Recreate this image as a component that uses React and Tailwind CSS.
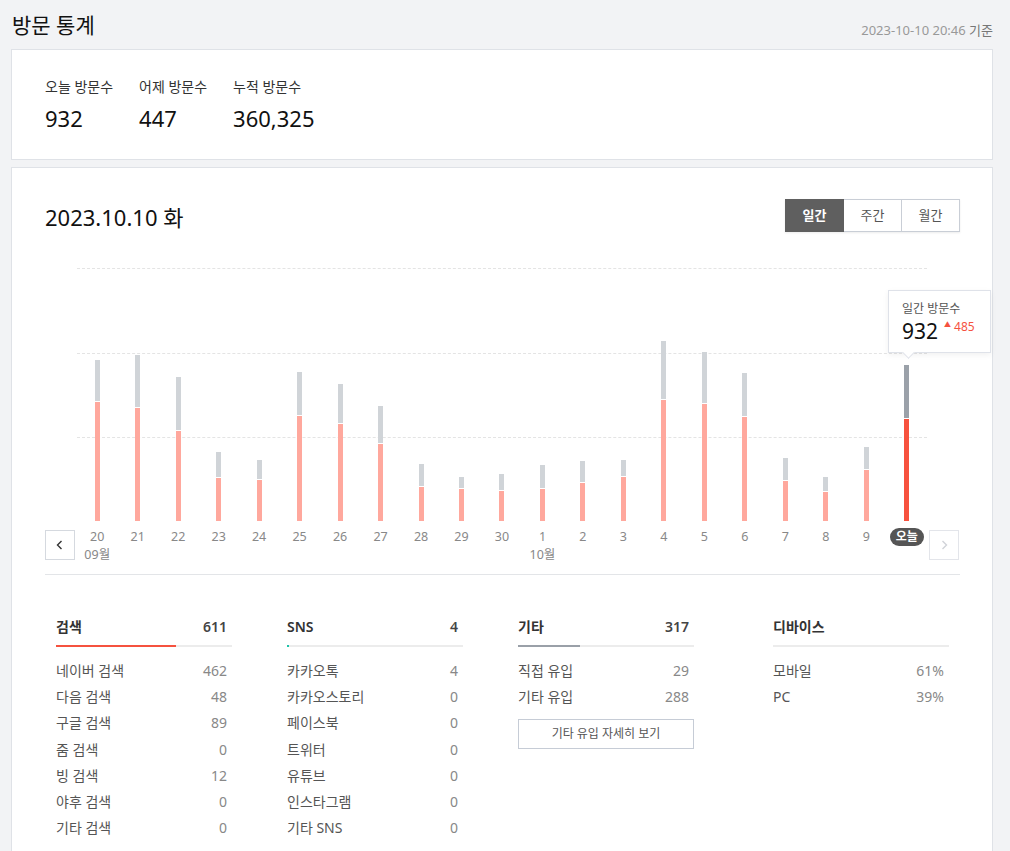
import React from "react";

const days = [
  { d: "20", total: 161, red: 119 },
  { d: "21", total: 166, red: 113 },
  { d: "22", total: 144, red: 90 },
  { d: "23", total: 69, red: 43 },
  { d: "24", total: 61, red: 41 },
  { d: "25", total: 149, red: 105 },
  { d: "26", total: 137, red: 97 },
  { d: "27", total: 115, red: 77 },
  { d: "28", total: 57, red: 34 },
  { d: "29", total: 44, red: 32 },
  { d: "30", total: 47, red: 30 },
  { d: "1", total: 56, red: 32 },
  { d: "2", total: 60, red: 38 },
  { d: "3", total: 61, red: 44 },
  { d: "4", total: 180, red: 121 },
  { d: "5", total: 169, red: 117 },
  { d: "6", total: 148, red: 104 },
  { d: "7", total: 63, red: 40 },
  { d: "8", total: 44, red: 29 },
  { d: "9", total: 74, red: 51 },
  { d: "오늘", total: 156, red: 102, today: true },
];

const months = { 0: "09월", 11: "10월" };

const tables = [
  {
    title: "검색",
    total: "611",
    bar: "bg-[#f5523f]",
    pct: "68%",
    rows: [
      ["네이버 검색", "462"],
      ["다음 검색", "48"],
      ["구글 검색", "89"],
      ["줌 검색", "0"],
      ["빙 검색", "12"],
      ["야후 검색", "0"],
      ["기타 검색", "0"],
    ],
  },
  {
    title: "SNS",
    total: "4",
    bar: "bg-[#1cc3a9]",
    pct: "1%",
    rows: [
      ["카카오톡", "4"],
      ["카카오스토리", "0"],
      ["페이스북", "0"],
      ["트위터", "0"],
      ["유튜브", "0"],
      ["인스타그램", "0"],
      ["기타 SNS", "0"],
    ],
  },
  {
    title: "기타",
    total: "317",
    bar: "bg-[#9aa0a8]",
    pct: "35%",
    rows: [
      ["직접 유입", "29"],
      ["기타 유입", "288"],
    ],
    button: "기타 유입 자세히 보기",
  },
  {
    title: "디바이스",
    total: "",
    bar: "",
    pct: "0%",
    rows: [
      ["모바일", "61%"],
      ["PC", "39%"],
    ],
  },
];

const StatTable = ({ t, extra }) => (
  <div className={`w-[176px] ${extra}`}>
    <div className="flex justify-between items-center h-5 text-[14px] font-semibold text-[#333]">
      <span>{t.title}</span>
      <span className="text-[#444] pr-[5px]">{t.total}</span>
    </div>
    <div className="mt-[9px] h-[2px] bg-[#ececec] flex">
      {t.bar && <div className={`h-full ${t.bar}`} style={{ width: t.pct }} />}
    </div>
    <div className="mt-[10px]">
      {t.rows.map(([label, value]) => (
        <div key={label} className="flex justify-between items-center h-[26.3px] text-[14px]">
          <span className="text-[#555]">{label}</span>
          <span className="text-[#888] pr-[5px]">{value}</span>
        </div>
      ))}
    </div>
    {t.button && (
      <button className="mt-[9px] w-full h-[30px] border border-[#c6ccd6] text-[12px] text-[#555] bg-white">
        {t.button}
      </button>
    )}
  </div>
);

const App = () => {
  return (
    <div className="min-h-screen bg-[#f2f3f5] pl-[11px] pr-[17px] font-['Noto_Sans','Noto_Sans_CJK_KR',sans-serif]">
      <div className="flex justify-between items-end h-[49px] pb-[12px]">
        <h1 className="text-[21px] text-[#111] pl-[1px] leading-none pb-[1px]">방문 통계</h1>
        <div className="text-[13px] text-[#999] leading-none">
          2023-10-10 20:46 <span className="text-[#777]">기준</span>
        </div>
      </div>

      <div className="bg-white border border-[#dfe2e7] h-[111px] flex gap-[26px] pl-[33px] pt-[27px]">
        <div className="flex flex-col">
          <span className="text-[14px] text-[#333] leading-[20px]">오늘 방문수</span>
          <span className="text-[22px] text-[#111] leading-[30px] mt-[6px]">932</span>
        </div>
        <div className="flex flex-col">
          <span className="text-[14px] text-[#333] leading-[20px]">어제 방문수</span>
          <span className="text-[22px] text-[#111] leading-[30px] mt-[6px]">447</span>
        </div>
        <div className="flex flex-col">
          <span className="text-[14px] text-[#333] leading-[20px]">누적 방문수</span>
          <span className="text-[22px] text-[#111] leading-[30px] mt-[6px]">360,325</span>
        </div>
      </div>

      <div className="mt-[7px] bg-white border border-[#dfe2e7] pl-[33px] pr-[32px] pt-[31px] pb-[20px]">
        <div className="flex justify-between items-center h-[33px]">
          <div className="text-[22px] text-[#111] pt-[4px]">2023.10.10 화</div>
          <div className="flex h-[33px] shadow-[0_1px_2px_rgba(0,0,0,0.08)]">
            <button className="w-[59px] bg-[#5f5f5f] text-white text-[13px] font-bold">일간</button>
            <button className="w-[58px] border border-l-0 border-[#c9ced6] text-[#555] text-[13px]">주간</button>
            <button className="w-[58px] border border-l-0 border-[#c9ced6] text-[#555] text-[13px]">월간</button>
          </div>
        </div>

        <div className="mt-[36px] pl-[32px]">
          <div className="relative grid w-[850px] h-[253px]">
            <div className="col-start-1 row-start-1 flex flex-col">
              <div className="h-[85px] border-t border-dashed border-[#e4e4e4]" />
              <div className="h-[84px] border-t border-dashed border-[#e4e4e4]" />
              <div className="h-[84px] border-t border-dashed border-[#e4e4e4]" />
            </div>
            <div className="col-start-1 row-start-1 grid grid-cols-21 items-end">
              {days.map((b) => (
                <div key={b.d} className="flex flex-col items-center">
                  <div
                    className={`w-[5px] ${b.today ? "bg-[#9ba1a9]" : "bg-[#d0d4d8]"}`}
                    style={{ height: b.total - b.red - 1 }}
                  />
                  <div className="w-[5px] h-[1px] bg-white" />
                  <div
                    className={`w-[5px] ${b.today ? "bg-[#f7523e]" : "bg-[#ffa89d]"}`}
                    style={{ height: b.red }}
                  />
                </div>
              ))}
            </div>
            <div className="absolute left-[811px] top-[22px] w-[103px] h-[63px] bg-white border border-[#dfe2e9] shadow-[0_2px_6px_rgba(0,0,0,0.06)] pl-[13px] pt-[9px]">
              <div className="text-[12px] text-[#555] leading-[18px]">일간 방문수</div>
              <div className="flex items-start">
                <span className="text-[21px] text-[#111] leading-[26px]">932</span>
                <span className="ml-[6px] mt-[1px] text-[12px] text-[#f5523f] leading-[16px] flex items-start gap-[3px]">
                  <span className="text-[7px] leading-[12px]">▲</span>485
                </span>
              </div>
              <div className="absolute left-[15px] -bottom-[5px] w-[9px] h-[9px] bg-white border-r border-b border-[#dfe2e9] rotate-45" />
            </div>
          </div>
        </div>

        <div className="mt-[7px] flex items-start">
          <button className="mt-[2px] w-[30px] h-[30px] border border-[#d5d9df] flex items-center justify-center text-[#333]">
            <svg width="12" height="12" viewBox="0 0 12 12" fill="none" stroke="currentColor" strokeWidth="1.4">
              <path d="M7.5 2 L3.5 6 L7.5 10" />
            </svg>
          </button>
          <div className="ml-[2px] w-[850px] grid grid-cols-21">
            {days.map((b, i) => (
              <div key={b.d} className="flex flex-col items-center">
                {b.today ? (
                  <span className="h-[18px] px-[6px] rounded-full bg-[#555] text-white text-[12px] font-bold leading-[18px]">
                    오늘
                  </span>
                ) : (
                  <span className="h-[18px] text-[12.5px] text-[#888] leading-[18px]">{b.d}</span>
                )}
                <span className="h-[18px] text-[12.5px] text-[#888] leading-[18px]">{months[i] || ""}</span>
              </div>
            ))}
          </div>
          <button className="ml-[2px] mt-[2px] w-[30px] h-[30px] border border-[#e3e5ea] flex items-center justify-center text-[#d0d3d8]">
            <svg width="12" height="12" viewBox="0 0 12 12" fill="none" stroke="currentColor" strokeWidth="1.4">
              <path d="M4.5 2 L8.5 6 L4.5 10" />
            </svg>
          </button>
        </div>

        <div className="mt-[10px] border-t border-[#e3e5e8]" />

        <div className="mt-[41px] pl-[11px] flex items-start">
          <StatTable t={tables[0]} extra="" />
          <StatTable t={tables[1]} extra="ml-[55px]" />
          <StatTable t={tables[2]} extra="ml-[55px]" />
          <StatTable t={tables[3]} extra="ml-[79px]" />
        </div>
      </div>
    </div>
  );
};

export default App;
